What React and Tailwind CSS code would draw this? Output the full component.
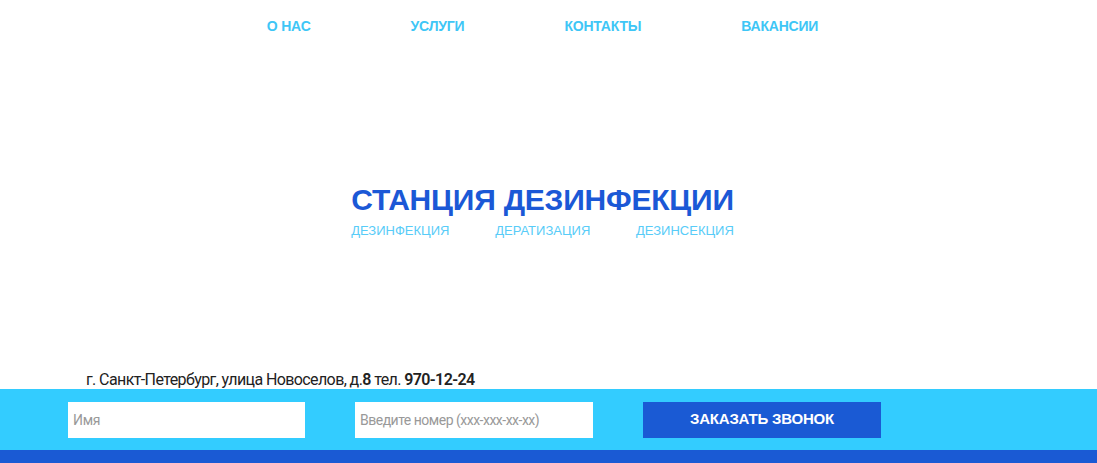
import React from "react";

const NAV = ["О НАС", "УСЛУГИ", "КОНТАКТЫ", "ВАКАНСИИ"];
const SERVICES = ["ДЕЗИНФЕКЦИЯ", "ДЕРАТИЗАЦИЯ", "ДЕЗИНСЕКЦИЯ"];

export default function App() {
  return (
    <div className="flex h-[463px] w-full flex-col bg-white font-['Liberation_Sans',Arial,sans-serif]">
      {/* Top nav */}
      <nav className="flex h-[52px] items-center justify-center gap-[100px] pr-[12px] pt-[1px]">
        {NAV.map((item) => (
          <a
            key={item}
            href="#"
            className="text-[14px] font-bold tracking-[-0.2px] text-[#3ec6f6]"
          >
            {item}
          </a>
        ))}
      </nav>

      {/* Hero */}
      <div className="flex flex-1 flex-col items-center justify-center pr-[12px]">
        <div className="flex flex-col">
          <h1 className="text-[30px] font-bold leading-[30px] tracking-[-0.2px] text-[#1b58d6]">
            СТАНЦИЯ ДЕЗИНФЕКЦИИ
          </h1>
          <div className="mt-[8px] flex justify-between text-[13px] leading-[16px] text-[#58ccf8]">
            {SERVICES.map((s) => (
              <span key={s}>{s}</span>
            ))}
          </div>
        </div>
      </div>

      {/* Address */}
      <p className="pl-[86px] font-['Roboto',sans-serif] text-[16px] leading-[18px] tracking-[-0.6px] text-[#222]">
        г. Санкт-Петербург, улица Новоселов, д.
        <span className="font-semibold">8</span> тел.{" "}
        <span className="font-semibold">970-12-24</span>
      </p>

      {/* Callback form */}
      <div className="flex h-[61px] items-center gap-[50px] bg-[#33ccff] pl-[68px]">
        <input
          type="text"
          placeholder="Имя"
          className="h-[36px] w-[237px] bg-white pl-[5px] font-['Roboto',sans-serif] text-[14px] tracking-[-0.3px] text-[#333] outline-none placeholder:text-[#999]"
        />
        <input
          type="text"
          placeholder="Введите номер (xxx-xxx-xx-xx)"
          className="h-[36px] w-[238px] bg-white pl-[5px] font-['Roboto',sans-serif] text-[14px] tracking-[-0.5px] text-[#333] outline-none placeholder:text-[#999]"
        />
        <button className="h-[36px] w-[238px] bg-[#1a5ad4] text-[15px] font-bold tracking-[-0.2px] text-white">
          ЗАКАЗАТЬ ЗВОНОК
        </button>
      </div>
      <div className="h-[13px] bg-[#1a5ad4]" />
    </div>
  );
}
